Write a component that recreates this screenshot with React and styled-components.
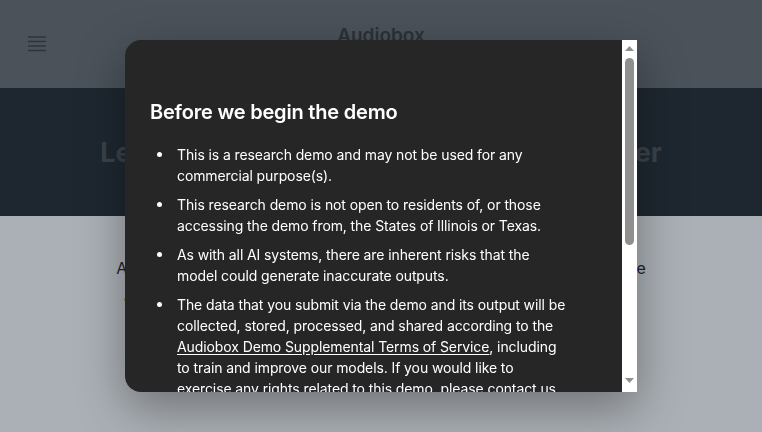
import React from "react";
import styled, { createGlobalStyle } from "styled-components";

const GlobalStyle = createGlobalStyle`
  html, body {
    margin: 0;
    padding: 0;
  }
  body {
    font-family: Inter, "Open Sans", "Liberation Sans", sans-serif;
    background: #abb0b6;
  }
  * {
    box-sizing: border-box;
  }
`;

// page behind the dialog
const Page = styled.div`
  width: 762px;
  height: 432px;
  overflow: hidden;
  display: flex;
  flex-direction: column;
`;

const Header = styled.header`
  height: 88px;
  flex-shrink: 0;
  background: #4b525a;
  display: grid;
  grid-template-columns: 80px 1fr 80px;
  align-items: start;
  padding: 0 28px;
`;

const MenuButton = styled.button`
  margin-top: 36px;
  padding: 0;
  border: 0;
  background: none;
  width: 18px;
  height: 16px;
  color: #2d333a;
`;

const Brand = styled.div`
  margin-top: 24px;
  text-align: center;
  font-size: 19px;
  line-height: 24px;
  font-weight: 600;
  color: #2b3137;
`;

const Hero = styled.section`
  height: 128px;
  flex-shrink: 0;
  background: #1e2730;
  display: flex;
  align-items: center;
  justify-content: center;
`;

const HeroTitle = styled.h1`
  margin: 0;
  white-space: nowrap;
  font-size: 27px;
  font-weight: 700;
  color: #3b424a;
`;

const Intro = styled.section`
  flex: 1;
  background: #abb0b6;
  display: flex;
  flex-direction: column;
  align-items: center;
  padding-top: 38px;
`;

const IntroLine = styled.span`
  display: block;
  white-space: nowrap;
  font-size: 16px;
  line-height: 28px;
  letter-spacing: -0.1px;
  color: #1e232a;
`;

// dialog
const Backdrop = styled.div`
  position: fixed;
  inset: 0;
  display: flex;
  justify-content: center;
  align-items: flex-start;
  padding-top: 40px;
`;

const DialogFrame = styled.div`
  position: relative;
  width: 512px;
  height: 352px;
  background: #262626;
  border-radius: 16px 0 0 16px;
  overflow: hidden;
  box-shadow: 0 16px 48px rgba(0, 0, 0, 0.35);
`;

const Scroller = styled.div`
  height: 100%;
  overflow-y: auto;
  scrollbar-width: none;
  color: #ffffff;
  padding: 58px 40px 52px 25px;
`;

const ScrollRail = styled.div`
  position: absolute;
  top: 0;
  right: 0;
  bottom: 0;
  width: 15px;
  background: #ffffff;
  display: flex;
  flex-direction: column;
  align-items: center;
  padding: 6px 0 9px;
`;

const RailTrack = styled.div`
  flex: 1;
  width: 100%;
  display: flex;
  justify-content: center;
  padding-top: 7px;
`;

const Thumb = styled.div`
  width: 9px;
  height: 187px;
  border-radius: 5px;
  background: #8f8f8f;
`;

const DialogTitle = styled.h2`
  margin: 0;
  font-size: 20px;
  line-height: 28px;
  font-weight: 600;
  letter-spacing: -0.2px;
`;

const Terms = styled.ul`
  margin: 18px 0 0 0;
  padding: 0 0 0 27px;
  width: 418px;
  list-style: none;
`;

const Term = styled.li`
  position: relative;
  font-size: 14px;
  line-height: 21px;
  letter-spacing: -0.1px;
  margin-bottom: 8px;

  &::before {
    content: "";
    position: absolute;
    left: -20px;
    top: 8px;
    width: 5px;
    height: 5px;
    border-radius: 50%;
    background: #ffffff;
  }
`;

const TermsLink = styled.a`
  color: #ffffff;
  text-decoration: underline;
  text-underline-offset: 2px;
`;

const Agree = styled.label`
  display: flex;
  align-items: center;
  gap: 10px;
  margin-top: 20px;
  font-size: 14px;
  line-height: 21px;
`;

const Check = styled.span`
  width: 18px;
  height: 18px;
  border: 2px solid #ffffff;
  border-radius: 4px;
  flex-shrink: 0;
`;

const Actions = styled.div`
  display: flex;
  justify-content: flex-end;
  margin-top: 24px;
`;

const PrimaryButton = styled.button`
  border: 0;
  border-radius: 20px;
  padding: 10px 22px;
  background: #0064e0;
  color: #ffffff;
  font-family: inherit;
  font-size: 15px;
  font-weight: 600;
`;

const MenuIcon = () => (
  <svg width="18" height="16" viewBox="0 0 18 16" fill="none">
    {[1, 5.5, 10, 14.5].map((y) => (
      <line key={y} x1="0" x2="18" y1={y} y2={y} stroke="currentColor" strokeWidth="1.4" />
    ))}
  </svg>
);

const Arrow = ({ down }) => (
  <svg width="9" height="5" viewBox="0 0 9 5">
    <path d={down ? "M0 0 H9 L4.5 5 Z" : "M0 5 H9 L4.5 0 Z"} fill="#8f8f8f" />
  </svg>
);

export default function App() {
  return (
    <>
      <GlobalStyle />
      <Page>
        <Header>
          <MenuButton aria-label="Menu">
            <MenuIcon />
          </MenuButton>
          <Brand>Audiobox</Brand>
          <span />
        </Header>
        <Hero>
          <HeroTitle>Let's create new audio and sound together</HeroTitle>
        </Hero>
        <Intro>
          <IntroLine>Audiobox is Meta's new research model for audio generation. Describe</IntroLine>
          <IntroLine>any voice or a sound you want, and Audiobox will generate it for you.</IntroLine>
        </Intro>
      </Page>
      <Backdrop>
        <DialogFrame role="dialog">
          <Scroller>
            <DialogTitle>Before we begin the demo</DialogTitle>
            <Terms>
              <Term>This is a research demo and may not be used for any commercial purpose(s).</Term>
              <Term>
                This research demo is not open to residents of, or those accessing the demo from,
                the States of Illinois or Texas.
              </Term>
              <Term>
                As with all AI systems, there are inherent risks that the model could generate
                inaccurate outputs.
              </Term>
              <Term>
                The data that you submit via the demo and its output will be collected, stored,
                processed, and shared according to the{" "}
                <TermsLink href="#">Audiobox Demo Supplemental Terms of Service</TermsLink>,
                including to train and improve our models. If you would like to exercise any
                rights related to this demo, please contact us <TermsLink href="#">here</TermsLink>.
              </Term>
              <Term>
                By using this demo, you agree to the Meta Terms of Service and acknowledge the
                Privacy Policy.
              </Term>
            </Terms>
            <Agree>
              <Check />I have read and agree to the terms above
            </Agree>
            <Actions>
              <PrimaryButton>Continue</PrimaryButton>
            </Actions>
          </Scroller>
          <ScrollRail aria-hidden="true">
            <Arrow />
            <RailTrack>
              <Thumb />
            </RailTrack>
            <Arrow down />
          </ScrollRail>
        </DialogFrame>
      </Backdrop>
    </>
  );
}
